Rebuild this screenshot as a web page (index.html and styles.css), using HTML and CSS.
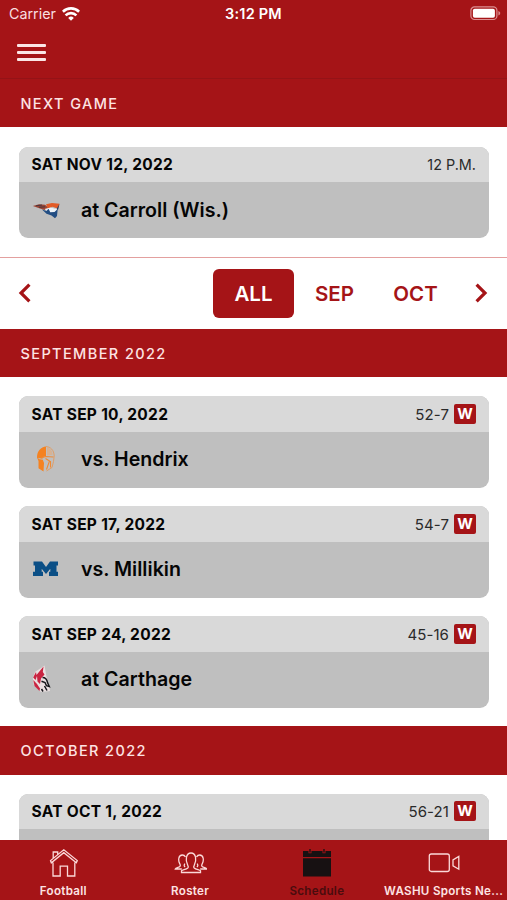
FILE: index.html
```html
<!DOCTYPE html>
<html lang="en">
<head>
  <meta charset="UTF-8" />
  <meta name="viewport" content="width=device-width, initial-scale=1.0" />
  <title>Football Schedule</title>
  <link rel="stylesheet" href="styles.css">
</head>
<body>
<div class="app">

  <header class="top">
    <div class="status">
      <div class="carrier">
        <span>Carrier</span>
        <svg width="18" height="14" viewBox="0 0 18 14" fill="none" stroke="#fff" stroke-width="2.6">
          <path d="M.9 4.700a11.600 11.600 0 0 1 16.200 0" />
          <path d="M3.600 8.400a7.600 7.600 0 0 1 10.800 0" />
          <path d="M9 13.700 6.200 10.900a4 4 0 0 1 5.600 0z" fill="#fff" stroke="none" />
        </svg>
      </div>
      <div class="clock">3:12 PM</div>
      <div class="battery">
        <svg width="31" height="15" viewBox="0 0 31 15">
          <rect x=".9" y=".9" width="26" height="12.6" rx="3.6" fill="none" stroke="#db8f92" stroke-width="1.2" />
          <rect x="2.9" y="2.7" width="22" height="9" rx="1.8" fill="#fff" />
          <path d="M28.4 5v4.6c1.3-.5 1.8-1.3 1.8-2.3s-.5-1.8-1.8-2.3z" fill="#d98588" />
        </svg>
      </div>
    </div>
    <div class="menu">
      <span></span>
      <span></span>
      <span></span>
    </div>
  </header>

  <main>
    <h2 class="bar">NEXT GAME</h2>
    <section class="games next">
      <article class="card">
        <div class="card-head"><b>SAT NOV 12, 2022</b><span class="score time">12 P.M.</span></div>
        <div class="card-body">
          <svg class="logo" width="30" height="30" viewBox="0 0 30 30">
            <path d="M.8 11 7 9.200l6 .5 4 3.500-4 2z" fill="#9b4534" />
            <path d="M4 10.800l6-.8M7 12.300l6-.5" stroke="#3e3542" stroke-width=".9" />
            <path d="M14 9.300 20 8l7.500.8-1.500 5-5.500-2-4.500 2.200z" fill="#e25b27" />
            <path d="M12.500 14 18.500 12.500l4.500 1.200 2.500-.4-1.500 4.200-6 .8z" fill="#eef3f8" />
            <path d="M10 14.500l4.500 1.500 2-2.200 1.800 3.500 4.200-.3 3.200-3-.7 7-2 2.200-3.500-2.700-5-1.700z" fill="#234e83" />
            <path d="M27.500 9 26 15l-1.500-1z" fill="#263d60" />
          </svg>
          <strong>at Carroll (Wis.)</strong>
        </div>
      </article>
    </section>

    <nav class="months">
      <svg class="arrow" width="14" height="20" viewBox="0 0 14 20"><path d="M11.400 1.600 3 10l8.400 8.400" /></svg>
      <div class="pills">
        <span class="pill active">ALL</span>
        <span class="pill">SEP</span>
        <span class="pill">OCT</span>
      </div>
      <svg class="arrow" width="14" height="20" viewBox="0 0 14 20"><path d="M2.600 1.600 11 10l-8.400 8.400" /></svg>
    </nav>

    <h2 class="bar">SEPTEMBER 2022</h2>
    <section class="games">
      <article class="card">
        <div class="card-head"><b>SAT SEP 10, 2022</b><span class="score">52-7</span><i class="win">W</i></div>
        <div class="card-body">
          <svg class="logo" width="30" height="30" viewBox="0 0 30 30">
            <path d="M5 13.500C5 7 9 3 14 2.500V12l-4 1.500L12 19l-.5 8.500-5-3.200V17z" fill="#f58220" />
            <path d="M14 2.500c4.500.3 8 3.500 8.200 9.500l-.7 5.500-1.500 6-5.500 3.500" fill="none" stroke="#e39a5c" stroke-width=".9" />
            <path d="M15 3v8.500l5.500-.8c0-3.500-2-6.700-5.500-7.700z" fill="#f2a160" opacity=".45" />
            <path d="M8 14.500l5.500-2 8 .5M13.500 14.500 17.500 17l-3 8.500M18.500 17v6.500" fill="none" stroke="#ef8a35" stroke-width="1.1" />
            <path d="M6.500 14.300 11 15.500" stroke="#c9b39f" stroke-width="1.200" />
          </svg>
          <strong>vs. Hendrix</strong>
        </div>
      </article>
      <article class="card">
        <div class="card-head"><b>SAT SEP 17, 2022</b><span class="score">54-7</span><i class="win">W</i></div>
        <div class="card-body">
          <svg class="logo" width="30" height="30" viewBox="0 0 30 30">
            <path d="M1.500 7.500h8.500l4 5.500 4-5.500H26v4h-1.500v6.200H26v4.300h-9v-4.300h1.300v-3L14 20l-4.300-5.300v3H11v4.300H1v-4.300h2v-6.200H1.500z" fill="#0b4f86" />
          </svg>
          <strong>vs. Millikin</strong>
        </div>
      </article>
      <article class="card">
        <div class="card-head"><b>SAT SEP 24, 2022</b><span class="score">45-16</span><i class="win">W</i></div>
        <div class="card-body">
          <svg class="logo" width="30" height="30" viewBox="0 0 30 30">
            <path d="M12.500 1.500 9 4 3 8 .8 14l1 7L9 28l9-1-1-6-2.500-8z" fill="#eadfe0" />
            <path d="M11.500 2.500 10.800 8l1.700 2.500-3.500 4L8 20l-2.500-2.500L5 12l-1.500 4L1.200 13.500 4 8l.5 3z" fill="#c92441" />
            <path d="M1.300 16 5 20l3 4.500-.5 2.500-5-5z" fill="#c92441" />
            <path d="M10.500 13.500c3 0 4.500 2 5 5l1.800 4-2.800-.8-1.500-3.200-3.500-1.300M12.500 22l2.500 4.500M9.500 25l1.500 2.500" fill="none" stroke="#15161a" stroke-width="1.5" />
          </svg>
          <strong>at Carthage</strong>
        </div>
      </article>
    </section>

    <h2 class="bar">OCTOBER 2022</h2>
    <section class="games">
      <article class="card">
        <div class="card-head"><b>SAT OCT 1, 2022</b><span class="score">56-21</span><i class="win">W</i></div>
        <div class="card-body"></div>
      </article>
    </section>
  </main>

  <footer class="tabs">
    <div class="tab">
      <svg width="32" height="30" viewBox="0 0 32 30">
        <path d="M6 14.500V28h7.200V18.200h7.300V28h7.300V14.500M4.300 14.800 3.500 12.600 16.800 1.800 30.300 12.600l-1 2.200L16.800 4.700zM6.200 10.300V4h4.500v2.700" />
      </svg>
      <span>Football</span>
    </div>
    <div class="tab">
      <svg width="34" height="30" viewBox="0 0 34 30">
        <path d="M8.500 24.500v-1.800c1-1 4.500-1.200 6.300-2.700.8-.8.5-2-.2-3.200-2.200-3.800-2-11.800 3.400-11.800s5.600 8 3.400 11.800c-.7 1.200-1 2.400-.2 3.200 1.800 1.500 5.300 1.700 6.300 2.700v1.800z" />
        <path d="M12.500 9c-.8-1.500-1.800-2-3.200-2-4 0-4.300 5.500-2.600 8.600.9 1.600.8 2.700-.4 3.300-2 .9-3.600 1-4 2.100h6.500M11.800 15.600c-.9 1.600-.8 2.700.4 3.300M23.500 9c.8-1.500 1.800-2 3.200-2 4 0 4.300 5.500 2.600 8.600-.9 1.600-.8 2.700.4 3.300 2 .9 3.600 1 4 2.100h-6.500M24.200 15.600c.9 1.600.8 2.700-.4 3.300" />
      </svg>
      <span>Roster</span>
    </div>
    <div class="tab current">
      <svg width="30" height="30" viewBox="0 0 30 30">
        <path class="solid" d="M1 3h5.500v2.300h3V3h11v2.300h3V3H29v6H1zM1 10.200h28V28.500H1z" />
        <path d="M8 1v3.500M22 1v3.500" />
      </svg>
      <span>Schedule</span>
    </div>
    <div class="tab">
      <svg width="34" height="30" viewBox="0 0 34 30">
        <rect x="2.300" y="6" width="20" height="17.500" rx="2" />
        <path d="M31.800 8.500v12.700l-5.800-3.400v-5.900z" />
      </svg>
      <span>WASHU Sports Ne...</span>
    </div>
  </footer>

</div>
</body>
</html>
```
FILE: styles.css
```css
* {
  box-sizing: border-box;
}
body {
  margin: 0;
  background: #fff;
  font-family: Inter, "Liberation Sans", sans-serif;
  color: #050505;
}
.app {
  display: flex;
  flex-direction: column;
  height: 900px;
  overflow: hidden;
}
main {
  flex: 1;
  min-height: 0;
  overflow: hidden;
}

/* top bar */
.top {
  height: 79px;
  flex: none;
  background: #a51417;
  border-bottom: 1px solid #941317;
  color: #fff;
}
.status {
  display: grid;
  grid-template-columns: 1fr auto 1fr;
  align-items: center;
  height: 27px;
  padding: 0 6px 0 9px;
}
.carrier {
  display: flex;
  align-items: center;
  gap: 6px;
  font-size: 14.3px;
  color: #f9dfe0;
}
.clock {
  margin-right: 3px;
  font-size: 14.5px;
  font-weight: 600;
  letter-spacing: 0.2px;
}
.battery {
  display: flex;
  justify-content: flex-end;
}
.menu {
  display: flex;
  flex-direction: column;
  gap: 4px;
  width: 29px;
  margin: 17px 0 0 17px;
}
.menu span {
  height: 3px;
  border-radius: 1px;
  background: #fbe6e6;
}

/* section bars */
.bar {
  height: 48.4px;
  margin: 0;
  padding-left: 20.5px;
  background: #a51417;
  color: #fde3e3;
  font-size: 14.5px;
  font-weight: 500;
  line-height: 50px;
  letter-spacing: 1.4px;
}

/* game cards */
.games {
  display: flex;
  flex-direction: column;
  gap: 18.5px;
  padding: 19px 18px 18.4px 19px;
}
.next {
  padding-top: 19.6px;
  padding-bottom: 18.5px;
  border-bottom: 1px solid #e3a09f;
}
.card {
  height: 91.5px;
  flex: none;
  border-radius: 9px;
  overflow: hidden;
  background: #bfbfbf;
}
.card-head {
  display: flex;
  align-items: center;
  height: 35.5px;
  padding: 0 13px 0 12.5px;
  background: #d9d9d9;
  font-size: 15.5px;
}
.card-head b {
  flex: 1;
  font-weight: 700;
  letter-spacing: 0.28px;
}
.score {
  color: #2a2a2a;
  font-size: 15px;
  letter-spacing: 0.1px;
}
.time {
  font-size: 14.4px;
  letter-spacing: 0;
}
.win {
  width: 22px;
  height: 20px;
  margin-left: 5px;
  border-radius: 2px;
  background: #a51417;
  color: #fff;
  font-size: 15px;
  font-style: normal;
  font-weight: 700;
  line-height: 20px;
  text-align: center;
}
.card-body {
  display: flex;
  align-items: center;
  height: 55px;
  padding-left: 13px;
}
.logo {
  width: 30px;
  margin-right: 19px;
}
.card-body strong {
  font-size: 19.6px;
  font-weight: 600;
}

/* month picker */
.months {
  display: flex;
  align-items: center;
  height: 71px;
  padding: 0 19px 0 18px;
}
.arrow {
  fill: none;
  stroke: #a51417;
  stroke-width: 3.2;
}
.pills {
  display: flex;
  flex: 1;
  justify-content: flex-end;
  padding-right: 18px;
}
.pill {
  width: 81px;
  height: 49px;
  border-radius: 6px;
  color: #a51417;
  font-size: 20.5px;
  font-weight: 600;
  line-height: 49px;
  text-align: center;
}
.active {
  background: #a51417;
  color: #fff;
}

/* tab bar */
.tabs {
  display: grid;
  grid-template-columns: repeat(4, 1fr);
  height: 60px;
  flex: none;
  background: #a51417;
  color: #fde3e3;
}
.tab {
  display: flex;
  flex-direction: column;
  align-items: center;
  padding-top: 8px;
  font-size: 11.6px;
  font-weight: 600;
  line-height: 14px;
  letter-spacing: 0.3px;
  white-space: nowrap;
}
.tab svg {
  flex: none;
  margin-bottom: 6px;
  fill: none;
  stroke: #fbd9d9;
  stroke-width: 1.3;
}
.current {
  color: #4a0c0e;
}
.current svg {
  stroke: #171112;
}
.current .solid {
  fill: #171112;
  stroke: none;
}
```
